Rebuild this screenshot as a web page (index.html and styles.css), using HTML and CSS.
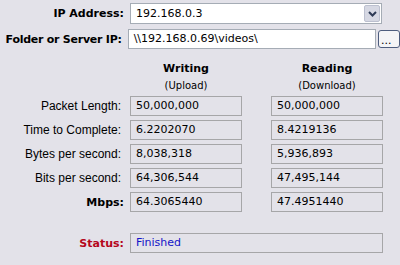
FILE: index.html
```html
<!DOCTYPE html>
<html lang="en">
  <head>
    <meta charset="UTF-8" />
    <meta name="viewport" content="width=device-width, initial-scale=1.0" />
    <title>Network Speed Test</title>
    <link rel="stylesheet" href="styles.css">
  </head>
  <body>
    <div class="panel">
      <div class="row first">
        <label class="label strong">IP Address:</label>
        <div class="select">
          <span class="select-text">192.168.0.3</span>
          <span class="select-arrow">
            <svg width="9" height="6" viewBox="0 0 9 6">
              <path d="M1 1 L4.5 4.5 L8 1" fill="none" stroke="#2d3a55" stroke-width="2" />
            </svg>
          </span>
        </div>
      </div>
      <div class="row second">
        <label class="label strong tight">Folder or Server IP:</label>
        <div class="input">\\192.168.0.69\videos\</div>
        <button class="browse">...</button>
      </div>

      <div class="results">
        <div></div>
        <div class="col-head">
          <div class="col-title">Writing</div>
          <div class="col-sub">(Upload)</div>
        </div>
        <div></div>
        <div class="col-head">
          <div class="col-title">Reading</div>
          <div class="col-sub">(Download)</div>
        </div>

        <div class="label">Packet Length:</div>
        <div class="field">50,000,000</div>
        <div></div>
        <div class="field">50,000,000</div>

        <div class="label">Time to Complete:</div>
        <div class="field">6.2202070</div>
        <div></div>
        <div class="field">8.4219136</div>

        <div class="label">Bytes per second:</div>
        <div class="field">8,038,318</div>
        <div></div>
        <div class="field">5,936,893</div>

        <div class="label">Bits per second:</div>
        <div class="field">64,306,544</div>
        <div></div>
        <div class="field">47,495,144</div>

        <div class="label strong">Mbps:</div>
        <div class="field">64.3065440</div>
        <div></div>
        <div class="field">47.4951440</div>
      </div>

      <div class="status">
        <div class="label strong status-label">Status:</div>
        <div class="field status-value">Finished</div>
      </div>
    </div>
  </body>
</html>
```

FILE: styles.css
```css
body {
  margin: 0;
  background-color: #e3e2e9;
  color: #000;
  font-family: "DejaVu Sans", Verdana, sans-serif;
  font-size: 11px;
  overflow: hidden;
}

.panel {
  width: 400px;
  height: 265px;
}

.label {
  text-align: right;
  white-space: nowrap;
  font-family: "Liberation Sans", Arial, sans-serif;
  font-size: 12px;
}

.strong {
  font-family: "DejaVu Sans", Verdana, sans-serif;
  font-size: 11px;
  font-weight: bold;
}

.tight {
  letter-spacing: -0.25px;
}

/* Top rows */
.row {
  display: flex;
  align-items: center;
}

.row .label {
  width: 124px;
  margin-right: 6px;
}

.row.first {
  margin-top: 3px;
  height: 21px;
}

.row.second {
  margin-top: 5px;
  height: 20px;
}

.select {
  width: 252px;
  height: 21px;
  box-sizing: border-box;
  border: 1px solid #a5acb5;
  background-color: #fff;
  display: flex;
  align-items: center;
  justify-content: space-between;
  padding: 0 1px 0 5px;
}

.select-arrow {
  width: 16px;
  height: 17px;
  box-sizing: border-box;
  background-color: #d6d8e3;
  border: 1px solid #bcc0cf;
  border-radius: 2px;
  display: flex;
  align-items: center;
  justify-content: center;
}

.input {
  width: 253px;
  height: 20px;
  box-sizing: border-box;
  border: 1px solid #a5acb5;
  background-color: #fff;
  padding: 0 5px;
  line-height: 18px;
}

.browse {
  margin-left: 2px;
  width: 22px;
  height: 18px;
  padding: 0 0 0 2px;
  border: 1px solid #4e5d7e;
  border-radius: 3px;
  background-color: #f4f4f6;
  font-family: inherit;
  font-size: 11px;
  line-height: 20px;
  text-align: left;
  flex-shrink: 0;
}

/* Results grid */
.results {
  display: grid;
  grid-template-columns: 130px 112px 29px 112px;
  row-gap: 4px;
  margin-top: 13px;
  align-items: center;
}

.results .label {
  padding-right: 9px;
}

.results .label.strong {
  padding-right: 6px;
}

.col-head {
  text-align: center;
  margin-bottom: -1px;
}

.col-title {
  font-weight: bold;
  line-height: 14px;
}

.col-sub {
  font-size: 10px;
  line-height: 14px;
  margin-top: 3px;
}

.field {
  height: 20px;
  box-sizing: border-box;
  border: 1px solid #a6a6a8;
  padding: 0 5px;
  line-height: 18px;
  white-space: nowrap;
}

/* Status */
.status {
  display: grid;
  grid-template-columns: 130px 253px;
  align-items: center;
  margin-top: 21px;
}

.status-label {
  padding-right: 6px;
  color: #b5081c;
}

.status-value {
  color: #1414c8;
}
```
